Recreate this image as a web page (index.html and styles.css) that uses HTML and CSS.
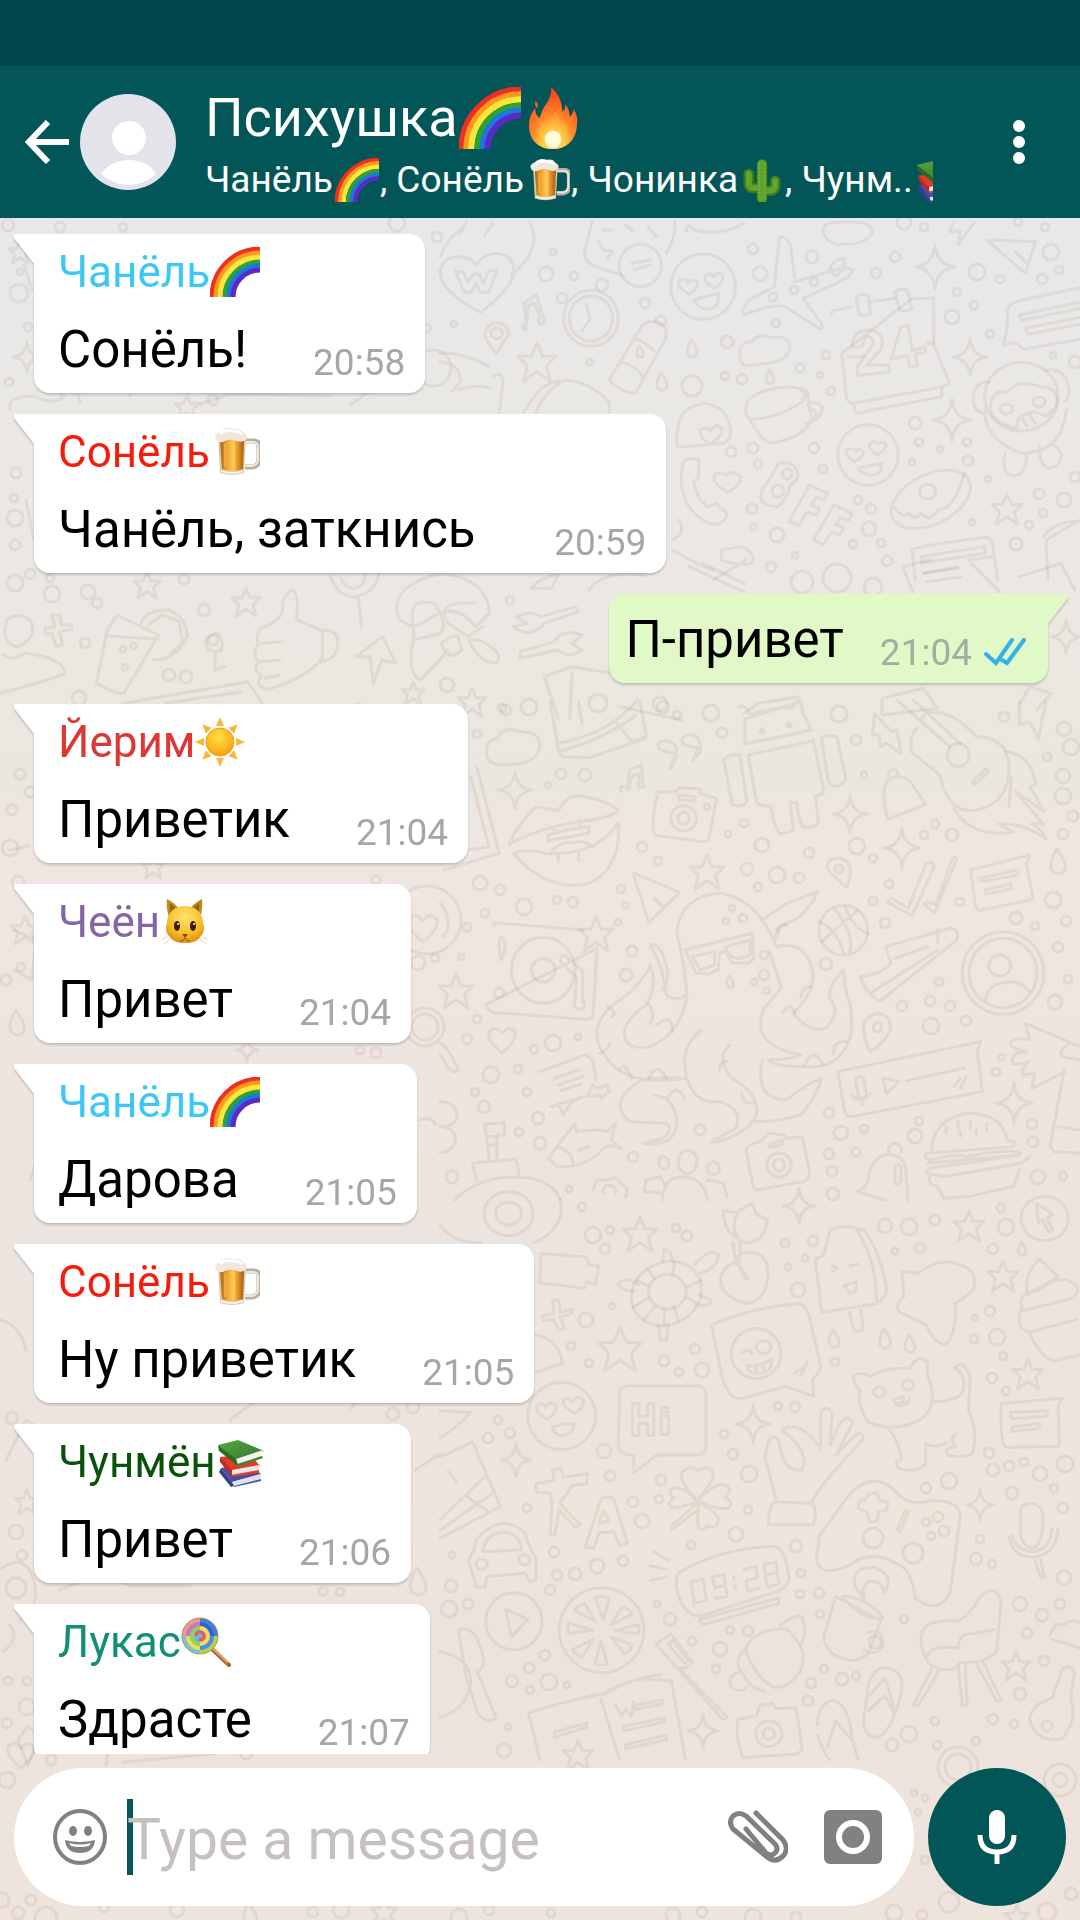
FILE: index.html
```html
<!DOCTYPE html>
<html lang="ru">
<head>
    <meta charset="UTF-8">
    <meta name="viewport" content="width=device-width, initial-scale=1.0">
    <title>Психушка</title>
    <link rel="stylesheet" href="styles.css">
</head>
<body>
    <!-- emoji set -->
    <svg class="defs" aria-hidden="true">
        <defs>
            <linearGradient id="beer-fill" x1="0" x2="1" y1="0" y2="0">
                <stop offset="0" stop-color="#a8620f"/>
                <stop offset=".3" stop-color="#f3a62c"/>
                <stop offset=".55" stop-color="#ffc758"/>
                <stop offset=".8" stop-color="#d9861c"/>
                <stop offset="1" stop-color="#a45d10"/>
            </linearGradient>
            <radialGradient id="fire-fill" cx=".5" cy=".9" r=".85">
                <stop offset="0" stop-color="#fffbd0"/>
                <stop offset=".25" stop-color="#ffd84a"/>
                <stop offset=".5" stop-color="#ff8a2a"/>
                <stop offset="1" stop-color="#f9401c"/>
            </radialGradient>
            <radialGradient id="sun-fill" cx=".45" cy=".35" r=".7">
                <stop offset="0" stop-color="#ffe04a"/>
                <stop offset=".6" stop-color="#fdb91f"/>
                <stop offset="1" stop-color="#f39a12"/>
            </radialGradient>
            <radialGradient id="cat-fill" cx=".5" cy=".3" r=".75">
                <stop offset="0" stop-color="#ffe36b"/>
                <stop offset=".6" stop-color="#f8bd2c"/>
                <stop offset="1" stop-color="#d8860c"/>
            </radialGradient>
            <linearGradient id="book-fill" x1="0" x2="1" y1="0" y2="1">
                <stop offset="0" stop-color="#5aa845"/>
                <stop offset="1" stop-color="#2f7728"/>
            </linearGradient>
        </defs>
        <symbol id="rainbow" viewBox="0 0 50 50">
            <g fill="none" stroke-width="5">
                <path stroke="#ee2f22" d="M2 50A48 48 0 0 1 50 2"/>
                <path stroke="#fb9a1c" d="M6 50A44 44 0 0 1 50 6"/>
                <path stroke="#fde63c" d="M10 50A40 40 0 0 1 50 10"/>
                <path stroke="#2da336" d="M15 50A35 35 0 0 1 50 15"/>
                <path stroke="#1f76e0" d="M19 50A31 31 0 0 1 50 19"/>
                <path stroke="#5a2bc4" d="M23 50A27 27 0 0 1 50 23"/>
            </g>
        </symbol>
        <symbol id="beer" viewBox="0 0 50 50">
            <path d="M35 14h9q5 0 5 6v12q0 7-7 8h-7" fill="none" stroke="#b9aea2" stroke-width="5"/>
            <path d="M35 15h8q5 0 5 5v12q0 6-6 7h-7" fill="none" stroke="#eee8e0" stroke-width="2"/>
            <path d="M8 10h28l-2 36q-12 4-24 0z" fill="#d8c9b4"/>
            <path d="M10 13h24l-1 29q-11 4-21 0z" fill="url(#beer-fill)"/>
            <path d="M15 16v24M24 16v25" stroke="#ffdc8a" stroke-width="1" opacity=".7"/>
            <path d="M11 44q11 4 22 0" stroke="#fbf3e4" stroke-width="2" fill="none"/>
            <path d="M6 13q-3-6 4-8Q15-1 24 2q7-1 9 3 6 3 3 8-5 3-9 1-8-3-12 0-5 3-9-1z" fill="#f1e7dc"/>
            <path d="M10 7q5-5 13-3 6 0 9 3" fill="none" stroke="#fff" stroke-width="3"/>
        </symbol>
        <symbol id="fire" viewBox="0 0 50 50">
            <g transform="translate(4 0) scale(.84 1)">
                <path d="M25 50C11 50 2 43 2 31c0-6 2-10 6-14 0 4 1 6 4 8 2-4 3-8 7-12 3-4 5-8 4-13 7 5 11 12 11 20 2-1 3-3 3-6 3 3 4 7 4 10 2-1 3-3 4-6 3 4 4 8 3 13-1 12-10 19-23 19z" fill="url(#fire-fill)"/>
                <path d="M8 11q4 2 2 6-3-1-2-6z" fill="#fb5a1e"/>
                <path d="M25 50c-8 0-14-5-14-12 0-5 3-9 6-11 0 4 1 5 3 6 1-6 6-8 6-14 5 4 7 8 6 13 2 0 3-2 3-4 3 3 4 6 4 10 0 8-6 12-14 12z" fill="#ffb838" opacity=".4"/>
                <ellipse cx="25" cy="42" rx="8" ry="7" fill="#fffbd8"/>
            </g>
        </symbol>
        <symbol id="cactus" viewBox="0 0 50 50">
            <path d="M25 46V7M25 34H15q-5 0-5-6V18M25 37h9q6 0 6-6v-5" fill="none" stroke="#3f7a1d" stroke-width="12" stroke-linecap="round"/>
            <path d="M25 46V7" stroke="#5da32c" stroke-width="10" stroke-linecap="round"/>
            <path d="M23 34h-8q-5 0-5-6V18M28 37h6q6 0 6-6v-5" fill="none" stroke="#5da32c" stroke-width="7" stroke-linecap="round"/>
            <path d="M22 7v40M28 7v40M9 18v9M40 27v5" stroke="#b5d55d" stroke-width="1" stroke-dasharray="1 3"/>
        </symbol>
        <symbol id="books" viewBox="0 0 50 50">
            <path d="M5 31l28-5 12 11-29 8z" fill="#4450a5"/>
            <path d="M16 45l29-8v5l-27 7z" fill="#e3e1ea"/>
            <path d="M5 31l11 14 2 4-3 1L3 35z" fill="#34408e"/>
            <path d="M18 49l27-7v2l-27 6z" fill="#4450a5"/>
            <path d="M4 20l30-3 10 12-28 6z" fill="#e23a2b"/>
            <path d="M16 33l27-5v6l-27 5z" fill="#eee9e8"/>
            <path d="M4 20l12 13v7L4 25z" fill="#c12a22"/>
            <path d="M15 38l28-5v3l-27 4z" fill="#e23a2b"/>
            <path d="M2 8L22 3l26 11-28 9z" fill="url(#book-fill)"/>
            <path d="M20 22l27-9-2 7-23 8z" fill="#f4f1ec"/>
            <path d="M2 8l18 14 2 7L3 14z" fill="#2c6a25"/>
            <path d="M21 27l25-8 1 2-26 9z" fill="#3a8530"/>
        </symbol>
        <symbol id="sun" viewBox="0 0 50 50">
            <g fill="#f8b83a">
                <path id="ray" d="M21 9l4-9 4 9z"/>
                <use href="#ray" transform="rotate(45 25 25)"/>
                <use href="#ray" transform="rotate(90 25 25)"/>
                <use href="#ray" transform="rotate(135 25 25)"/>
                <use href="#ray" transform="rotate(180 25 25)"/>
                <use href="#ray" transform="rotate(225 25 25)"/>
                <use href="#ray" transform="rotate(270 25 25)"/>
                <use href="#ray" transform="rotate(315 25 25)"/>
            </g>
            <circle cx="25" cy="25" r="14" fill="url(#sun-fill)" stroke="#f0a01c"/>
        </symbol>
        <symbol id="cat" viewBox="0 0 50 50">
            <path d="M7 2q8 4 12 10l-10 9Q6 10 7 2zM42 2q-8 4-12 10l10 9q3-9 2-19z" fill="#c08a17"/>
            <path d="M10 6q5 4 7 8l-7 6zM39 6q-5 4-7 8l7 6z" fill="#8c6512"/>
            <path d="M25 9c11 0 18 7 18 17 2 5 1 10-2 13-4 6-9 7-16 7s-12-1-16-7c-3-3-4-8-2-13C7 16 14 9 25 9z" fill="url(#cat-fill)"/>
            <ellipse cx="17" cy="29" rx="3" ry="5" fill="#3a2008"/>
            <ellipse cx="33" cy="29" rx="3" ry="5" fill="#3a2008"/>
            <circle cx="18" cy="27" r="1" fill="#fff"/>
            <circle cx="34" cy="27" r="1" fill="#fff"/>
            <path d="M22 37h6l-3 4z" fill="#7a4a26"/>
            <path d="M25 41q-1 3-5 3M25 41q1 3 5 3" fill="none" stroke="#8a5510" stroke-width="1"/>
            <path d="M10 42l-6 5M7 40l-5 3M40 42l6 5M43 40l5 3" stroke="#d9d3cf" stroke-width="1"/>
        </symbol>
        <symbol id="lollipop" viewBox="0 0 50 50">
            <path d="M31 32l17 16" stroke="#a4602c" stroke-width="4" stroke-linecap="round"/>
            <path d="M31 31l16 15" stroke="#e0a263" stroke-width="2"/>
            <circle cx="19" cy="19" r="18" fill="#7aaede"/>
            <g fill="none" stroke-width="4">
                <path d="M19 3a16 16 0 0 1 16 16" stroke="#3d7fe0"/>
                <path d="M35 19a16 16 0 0 1-16 16" stroke="#b4d24a"/>
                <path d="M19 35A16 16 0 0 1 3 19" stroke="#7cc0d8"/>
                <path d="M3 19A16 16 0 0 1 19 3" stroke="#ec9a8c"/>
                <path d="M19 7a12 12 0 0 1 12 12" stroke="#2f62d0"/>
                <path d="M31 19a12 12 0 0 1-12 12" stroke="#4b8ee0"/>
                <path d="M19 31A12 12 0 0 1 7 19" stroke="#e8e04e"/>
                <path d="M7 19A12 12 0 0 1 19 7" stroke="#c77ab4"/>
                <path d="M19 11a8 8 0 0 1 8 8 8 8 0 0 1-8 8" stroke="#f6dc5c"/>
                <path d="M19 27a8 8 0 0 1-8-8 8 8 0 0 1 8-8" stroke="#8ed06a"/>
                <path d="M15 19q0-5 5-4 4 2 3 6-2 3-5 1" stroke="#ea5c50" stroke-width="3"/>
            </g>
            <circle cx="19" cy="19" r="18" fill="none" stroke="#b8935c" stroke-width="1"/>
        </symbol>
    </svg>

    <!-- wallpaper -->
    <svg class="wallpaper" id="wallpaper" viewBox="0 0 1080 1920" preserveAspectRatio="xMidYMin slice" aria-hidden="true">
        <g transform="translate(440 220) scale(.408 .3333)">
            <path d="M100 277Q60 255 30 220 0 190 0 155 5 110 45 110q30 0 43 25 15-30 50-35 45 5 43 60-8 50-81 117zM0 110Q20 50 60 20M175 165q60-60 55-120L220 5M50 40l15-35M110 45L130 10"/>
            <path d="M38 152l20 5 10 30 15-25 15 2 8 28 12-38 22-3-20 65-20 2-12-28-12 28-18-3z"/>
            <path d="M373 5l-20 95q0 20 20 35l75 32M575 5q5 40-20 95M390 65l10 25 25 5-15 20M400 30h20M455 15l20 20M510 20l20 30"/>
            <ellipse cx="491" cy="136" rx="52" ry="64"/><path d="M470 130l45-10M475 150l40-15"/>
            <ellipse cx="370" cy="295" rx="67" ry="84"/><ellipse cx="370" cy="295" rx="53" ry="68"/><path d="M358 252l10 45-20 35"/>
            <path d="M138 400q-28-40-28-60 4-30 30-32 28 4 28 35zM125 340a14 16 0 1 0 28 0 14 16 0 1 0-28 0"/>
            <path d="M210 330a8 10 0 1 1 2-20l-6-60 30-25 18 70a8 10 0 1 1-8-2l-15-45-15 10z"/>
            <path d="M415 478l75-150q12-30 45-22 25 15 18 50l-75 165q-40-5-63-43zM440 425q40 10 60 50M475 355q30 10 50 40"/><circle cx="541" cy="302" r="13"/>
            <ellipse cx="645" cy="200" rx="79" ry="98"/><path d="M610 222q-30-20-25-38 15-15 23 3 10-15 23 0 2 20-21 35zM672 205q-28-20-22-38 12-15 20 3 12-20 24-2 2 20-22 37zM622 240l60-20q5 40-20 47-25 5-40-27z"/>
            <path d="M832 50q20 0 28 30l10 105 110-40q30-5 30 10-5 15-30 30l-90 50 45 75q5 20-5 15l-85-65q-30-10-100 25-10-20 20-50l55-35zM955 150q5-30 35-35v30l-20 25z"/>
            <path d="M735 410q-5-45 30-45 20-30 45-12 45-10 48 30-5 35-45 45l-60 10q-18-5-18-28z"/>
            <path d="M750 580q-10-55 70-75 60-10 80 10l10 75q-5 60-100 80-25-10-60-90zM765 597q60 0 120-50 20-25 0-35M900 555q20-15 37 5 0 40-40 50M905 570q20-5 15 20l-12 10"/>
            <path d="M960 280q0-12 20-12l30-8M1055 245l60-10M1155 237l55-3 0 140 38 110q0 10-20 18l-215 48q-18-3-18-30L985 400z"/>
            <path d="M1020 232q15-15 30-5l5 55q-12 10-28 2zM1115 215q15-12 30-5l12 55q-15 12-30 5zM1015 560l5 20 210-50v-25M1000 410l40 0M1195 370l15 0"/>
            <path d="M1010 380q0-50 45-50 40 10 25 60l-35 45 55 0 2 20-80 12 2-30 38-65q0-25-20-20l-8 30zM1110 400l20-80 18-3 10 75 30-10 2 15-25 5 5 35-18 5-7-35-42 10z"/>
            <path d="M1390 270q5-22 30-28l160-42v155l-150 33-20-20-30 8q15-60 10-106zM1420 285l160-42v20l-155 38zM1435 325l145-35v20l-140 33z"/>
            <path d="M1340 60l120 5-25 95zM1410 95l30 35"/>
            <ellipse cx="1425" cy="530" rx="90" ry="103"/><path d="M1335 570q0 90 90 130 100 0 110-130M1390 515q30-40 80-15 50 0 40 60l-25 30q-30-25-55-5-15 0-18 40-70-20-62-75 5-40 40-35zM1345 485q-40 0-38 60 5 35 30 35M1485 450q50-5 57 60 0 25-10 35M1415 600l10-10 15 30M1445 585l15 25M1385 700q-10 65 20 68 30 0 33-60M1470 680q-5 50 20 65 30 0 33-40-5-20-20-30"/>
            <circle cx="1388" cy="567" r="15"/><circle cx="1468" cy="546" r="15"/>
            <ellipse cx="1049" cy="705" rx="74" ry="91"/><path d="M1015 725q-25-20-17-35 15-10 20 5 10-12 20 0 0 15-23 30zM1072 705q-25-20-18-35 15-10 20 3 8-10 20 0 0 15-22 32zM1025 745l57-15q0 35-20 35-25 2-37-20z"/>
            <path d="M580 670Q580 600 600 575q45-45 90-5 30 50 20 85l-15 15-110 12zM660 673q-30-30-20-45 15-10 22 5 12-25 28-10 8 25-30 50z"/>
            <path d="M595 730q10-20 40-10l-2 55-12 10q10 55 35 75l20-10 28 30q-5 30-30 35Q600 890 590 780zM705 817q-40-30-33-50 15-18 28 0 15-20 38 5-5 30-33 45z"/>
            <path d="M830 730q40-10 48 35-5 20-20 30-5 40-30 65-50 0-40-45zM855 905l50-110 45 25-8 20-20-8-12 22 20 12-8 20-22-10-20 40zM915 960l50-105 45 25-8 22-22-10-10 22 20 10-10 20-20-8-20 38z"/>
            <ellipse cx="1203" cy="838" rx="110" ry="70" transform="rotate(-38 1203 838)"/><ellipse cx="1195" cy="815" rx="20" ry="22"/><path d="M1115 865q20 30 35 15 15 25 30 0 20 30 40-10 40 0 65-110"/>
            <path d="M1165 1080l-8-90q5-10 180-38 15 0 18 25l12 103M1180 1010l155-30v20l-155 30zM1185 1060l85-20M1295 1020l60-10M1490 1080l-5-120 83-60M1480 950q30-50 88-45"/>
            <path d="M0 400q60-5 120 40M0 425q50 5 50 60l-20 30M130 470q15-20 25 10l-10 100M45 510q40-20 80-5M205 578q40-90 85-95 70-10 125 65v30M235 578q20-60 60-90"/>
            <path d="M605 35q-5-30 20-5 60 20 120-20M940 40q-5-20 10-30l50-5q60 0 60 30-10 40-80 38-30 0-40-33zM1260 5l-10 30 25-2-5 40 40-65"/>
            <path d="M585 900q20 40-15 60M570 990q70 50 100 60M690 990l50-10q35 20 25 50-40 10-75-10zM750 1020l-80 60"/>
        </g>
        <g transform="translate(440 700) scale(.408 .3333)">
            <path d="M270 5l17 120q5 45 15 45l65 3 130-55q10 0 8-15L490 5M285 130q120-20 200-130M290 155q120-40 190-110M430 65l40 60 35-15M340 5l8 65"/>
            <path d="M115 165q-5-45 25-50 20-40 50-22l30 5q28 10 25 45-10 40-50 48-75 15-80-26z"/>
            <path d="M170 432q20-60 65-112l55 12q20-45 45-45 60 5 102 42-10 20-60 30-120 15-207 73zM180 460q30-15 80 0 120 10 178-92 5 150-80 185-100 20-178-93zM265 405q50-20 100-25v20l-100 22zM275 450q30-30 50-20 20-15 50 10M270 380l20 20M340 360l5 25M290 465v20M340 460v22"/>
            <path d="M735 20q15-10 25 25 60-25 100-20l20-25M885 5l5 35 20 50-162 42 0-75zM755 165l160-43 25 145q0 20-20 20l8 80q-10 20-38 15-10-20-17-75h-15l8 80q-10 15-35 12-15-30-20-80-30 0-35-15zM695 180q10-20 40-15l17 140q-12 20-35 8zM935 115q15-15 38-3l22 125q-10 25-35 20-10-10-10-30z"/>
            <path d="M535 275l45 0 5-12 50 3 5 15 38 15-20 125-10 5-120-20q-15-20 7-131zM585 285l40 5v12l-40-3z"/><ellipse cx="597" cy="355" rx="32" ry="38"/><ellipse cx="597" cy="355" rx="14" ry="18"/>
            <path d="M1120 0l130 140M1160 0l115 130M1170 85q-20 20-15 70l70 70q20 120 90 105 80-20 80-130-5-90-80-90-70-90-125-70-20 20 0 40M1305 245l35-40 5 10-35 40z"/><ellipse cx="1270" cy="165" rx="27" ry="35"/>
            <path d="M1260 325q40 90 145 72l-35-25q60-5 115 45-10-30-35-45 15-5 30 2l-70-100 70 60-35-75 15-5q-10-90-75-100M1400 230l-5 90M1420 5v70l25-10 22 50 18-110M1065 40l-5 65 15 0 5 35 15-10 35 30-10-70-15 3z"/>
            <path d="M1097 358q-15-70-5-105 20-40 60-10l38 70-25 12zM1100 228a12 14 0 1 1 22 0"/>
            <path d="M565 205l12-45q-38-5-43-20 0-22 25-15 25 0 20 50zM620 183l12-40q-38-5-40-20 5-22 28-18 22 10 18 50z"/>
            <path d="M445 275a9 9 0 1 1 14-5l5-60 30-15 5 65a8 8 0 1 1-10-15l-2-25-18 10-5 40"/>
            <path d="M472 517l115 60-75 90zM525 595l22 25M0 610q25 30 18 80l-10 20M90 200l55 260-135 50M75 230l45 210-50 10"/>
            <path d="M130 675q5-8 20-5l200 20M385 745l-10 205q-5 10-20 8l-220-20q-22-5-22-25zM150 780q-10-50 0-70 20 20 0 70zM295 785q0-25 15-15l40 45v85q10 25-5 28-20 0-15-25l5-70z"/><ellipse cx="253" cy="811" rx="78" ry="99"/><ellipse cx="253" cy="811" rx="29" ry="35"/>
            <path d="M580 700q10-115 110-120 90 20 135 160 80-20 90 90-5 60-50 110 40 60 80 45 40-50 10-90-5-40 35-85 0 60 15 100 10 80-5 120-30 80-110 70-70 0-85-20 50 0 80-15-130-30-90-140l42-62-30-110M580 700q15 60 25 180-20 30-50 5-10-100-40-145 10-20 30 20 25 80 0 110M605 880q-5 80-50 130-50 50-90 25-40-50 40-120 30-60 10-120-20 60-80 110-90 80-20 180 50 75 190 50M790 660l60-50 75-35q-10 40-50 80-60 30-50 60M640 990q-40 40-40 90 0 60 20 95 20 35 65 30 60 20 40 80l-60 40q20 5 60-20 60-40 50-90-10-50-60-80-40-60-5-100M595 1135q-90-10-120 20-60 60-10 110l90 5q20 20-10 45l-45 15q20 10 60-10 45-50-5-125l-30-10M790 1080q-20 120 60 120 50-50 85-65-10 50-50 110-60 20-110 20"/>
            <path d="M600 750l165-50 5 75-15 15-40-2-15-35-15 5-3 50-25 15-30-5zM618 770l55-15v40l-35 15zM700 740l60-20v45l-25 10q-30 0-35-35zM410 920q30 20 10 30M510 910q20 30 5 60M390 1060q25-10 25-30M440 1110q10-30 30 25M510 1140q20-60 45-5M530 975q40-40 40 20M840 940q20-40 30 0M830 700q-10-30 20-25M885 890q0-30 25-30M895 1095q20-60 45 0M965 1060q0-40 30-35M685 1110q0-30 20-25M740 1180q0 30 25 30M560 1190q20-40 40 5"/>
            <ellipse cx="989" cy="691" rx="60" ry="75"/><path d="M935 725l90-95M965 625q50 70 40 130M930 665q40 20 60 95M1048 700q-40-20-55-80"/>
            <path d="M1095 605l12-10 40 30 45-135 15-2 5 10-55 150zM1185 610l10-5 20 10 42-145 10 5-55 165z"/>
            <path d="M978 475q30 5 28 50l-8 38q-50-50-50-65 5-25 30-23zM1072 940q35 5 32 50-15 40-50 65-20-50-15-85 10-25 33-30z"/><ellipse cx="978" cy="507" rx="10" ry="12"/><ellipse cx="1072" cy="982" rx="10" ry="14"/>
            <path d="M1300 510l145-45-8 25 17 108-130 33q-10 0-12-15zM1325 535l92-25v15l-90 20zM1335 570l65-18v15l-62 15z"/>
            <path d="M1092 740l160-55q20 0 15 35l-190 185q-35-30-47-75 50-5 75-40zM1060 875l160-125M1115 775l80-35M1220 690v40"/>
            <ellipse cx="1380" cy="819" rx="100" ry="124"/><ellipse cx="1380" cy="819" rx="83" ry="104"/><ellipse cx="1372" cy="797" rx="27" ry="32"/><path d="M1338 900q0-50 60-55 35 5 45 30"/>
            <path d="M975 1115l350-90-8 30 12 120-320 75q-15 0-17-15zM1018 1135q10-10 20 0l8 50q-10 15-20 5zM1010 1185q20 30 45-5M1035 1200v15M1085 1135l40 10-30 35zM1145 1142l140-38M1260 1160l15-25M1275 1165l15-35"/>
            <path d="M1435 970l133 70M1435 975l10 45q-45-10-47 10 0 15 40 25-40 0-35 35 20 5 40-5-20 20-15 40l30-5q-5 25-8 45l83-50M1530 1110l-35 230 10 15 63 5M1515 1280l50 10M1545 1030q-30 20-20 40l43 10"/>
            <path d="M245 1115l110-50q20 5 22 35l5 40M350 1190l-30 20-18 35-10-30-20 5zM280 1135l60-25M290 1155l60-25M295 1172l50-20M360 1190l15-35 10 10 25-10 5 20-20 20-5-10z"/>
            <path d="M265 1375l65-105 5 25q50-10 75 0l20-25-10 50 25 25q-30-10-40-5-50 70-120 58zM290 1340q40 20 35 55M340 1350l25-10"/>
            <path d="M505 1440l35-10 15 30-10 20-45-5zM655 1440l40 10 8 40M545 1500q0-70 55-70 50 10 55 70M35 1500q60-70 150-68 90 0 110 68M85 1420l-5-30 105-12q10 30 8 55M90 1440l-5-20M108 1275q0-5 50-5v35h-20l2 70M110 1275l10 100M115 1310h25M115 1335h25M0 1205q40 0 42 45-5 30-42 30 40 5 38 40-10 40-38 38M0 1030q20 10 45 80-5 10-20 0l-25-45"/>
            <path d="M540 1370a15 20 0 1 1 10 40q-20-10-10-40zM605 1352q25 0 25 35-5 35-25 35-25-10-20-40 0-25 20-30zM670 1385q18 5 15 30-20 20-30-5 0-20 15-25z"/>
            <path d="M750 1350q0-15 35-25l20-25 40 5 5 10 38-5 18 105q0 25-15 30l-115 25q-10-5-12-30zM805 1335l35-15v12l-30 12z"/><ellipse cx="831" cy="1395" rx="30" ry="36"/><ellipse cx="831" cy="1395" rx="14" ry="18"/>
            <path d="M1022 1475q30-15 30-60 20-60 60-50 30 10 30 50l5 85M1022 1475l70 25M1100 1355a16 18 0 1 1 30 0M1115 1400q10-10 15 0v45q-10 15-15 5z"/>
            <path d="M1205 1350q5-100 95-110 80 5 90 80l20 5-5 15-210 20q-15 10 5 20 70-20 90-10 80-20 130-15v10l-220 40q-15 10-5 15l40 10 190-40 20-20M1200 1430q-5 25 20 30l15 35 60-5 110-30 15-50M1195 1390l225-25M1270 1265v20M1300 1265v20M1340 1270v20M1240 1280v20M1275 1295v15M1315 1290v15"/>
            <path d="M375 1470l10-30 25 0 20-8 15 20 15 15-5 25M400 1480a16 18 0 1 1 30 0"/>
        </g>
        <g transform="translate(440 1200) scale(.408 .357)">
            <path d="M0 70q30 50 100 50M230 120q80-40 65-120"/><ellipse cx="168" cy="38" rx="60" ry="62"/><ellipse cx="168" cy="38" rx="32" ry="32"/>
            <path d="M248 150l110 10 8 22 23 3-8 52-22-8-5 18-110-15zM250 325l30-8-5-35 15-2 5 35 28-10v12l-28 12 10 30-15 5-12-30-25 5zM230 378q60 5 70 80l-65 25"/>
            <ellipse cx="555" cy="262" rx="82" ry="94" transform="rotate(35 555 262)"/><ellipse cx="557" cy="257" rx="46" ry="48"/><path d="M545 172l5-35 15 10 5 28M625 180q40-50 58-25-5 40-45 50M475 255q-35 0-38-22 20-20 50 5M635 265l30 15q0 20-40 12M535 350l5 42h15l5-45M480 225l30 15M475 300l35-25M500 335l25-35M550 350l0-45M585 340l-12-40M630 290l-25-15M640 225l-35 20M575 175l-5 35M510 195l15 25"/>
            <path d="M695 30l30 5 40-25 10 30 28 15q-5 60-50 65-60-20-58-90zM730 35q-20 40 5 80M718 120l8 60M735 115v55M750 220q-30-50-15-70 60-15 68 40 5 90-50 100-70-20-65-75 20-50 45-35 10 20 22 40"/>
            <path d="M955 85q30-20 85 0 40 60 55 165 0 20-25 40l-135 25-15-150 20-10q10-40 15-70zM1020 80q50 90 50 200M1003 315l12 50q15 5 22-5l-5-50M960 185l15 5-12 10M1005 185l20-5M990 240l30-10q5 30-15 30z"/>
            <path d="M1132 200l40 5q50-45 100-25 50 20 35 70-15 20-45 40 5 80-20 115-30 0-50-55l-65-35q-15-15 10-45zM1470 165l45 50q-30 20-75 50-10-60 30-100zM1425 290q-5-30 40-35 40-40 75-30 40 20 10 50l-120 35zM1425 300q-20 60 20 70l115-35M1445 375q30 70 60 75l60-15"/>
            <ellipse cx="1482" cy="52" rx="58" ry="62"/><path d="M1462 10l40 30-15 10 15 35-10 5-15-35-10 10z"/>
            <path d="M665 350q100-50 215-60 20 5 28 50l25 125q0 20-20 35l3 50-68-28-110 35q-30 0-45-55z"/><ellipse cx="775" cy="430" rx="61" ry="70"/><circle cx="793" cy="412" r="18"/><path d="M740 430q15-20 25 0M752 465q35 0 60-20 5 40-30 40-25 5-30-20M775 465v15M790 460l5 15M868 485l20-15M885 490l15-35"/>
            <path d="M1015 490q20-10 40 5 40-30 95-22 20-45 45-20v40q30 80-15 120-60 40-130 10-30-50-20-90-20-20-15-43zM1207 565q60 0 75-30 10-40-20-65 20-30 38 30l-5 90q25 60 10 120-20 15-60 5l-5-15 25-10q-20-20 0-35M1240 680q-20 15-50 5l0 55q-20 25-65 12-15-20 5-25 0-40-30-85M1110 560l25-10v15l-15 8zM1120 575q20 5 30-15"/><circle cx="1077" cy="538" r="14"/><circle cx="1147" cy="518" r="14"/>
            <path d="M440 535q5-15 30-15h165q15 5 17 25v145q0 20-20 25H530l-55 50v-50q-35 0-38-25zM472 570h15v35h22v-35h15v90h-15v-35h-22v35h-15zM542 605h18v52h-18zM542 582h18v12h-18z"/>
            <ellipse cx="298" cy="605" rx="83" ry="94"/><path d="M262 615q-30-20-25-40 15-10 22 5 10-20 25-5 5 20-22 40zM330 597q-30-15-28-35 12-15 22 5 12-25 28-5 2 20-22 35zM275 635q30-10 55-8-5 30-30 35-20-5-25-27z"/>
            <path d="M0 590l75 5Q40 640 0 665M0 720l80-42 68 180L0 948M0 895l115-125M0 925l130-105M65 830l55 45M20 760l20 30"/>
            <path d="M235 795l45-10-5-30 22-3 5 25 60-10-3 28-35 5-30 50 50 60-12 8-40-50-10 70-12-3 5-85-5-30-35-2zM355 975l40-140q15-5 30 0l35 125-20 8-15-40-35 5-12 40zM390 905l10-35 15 30z"/>
            <path d="M630 840q-50-60-35-80 20-20 38 0 20-20 35 0 10 20-38 80zM632 842q50-60 75-40 10 10-8 30 20 10 10 30-30 10-77-20zM632 845q-40-50-65-35-10 15 8 25-20 10-10 25 20 5 67-15zM634 848q-5 50 0 70 15 10 20-5 30 10 28-20-5-20-48-45M630 850l-65 65 5 8 60-55"/>
            <path d="M805 910q0-60 20-65l90 5q10 30 0 60zM825 845l-28-120q5-50 15-60 15-5 18 10l10 50q20 40 48 30 20-50-50-110 10-15 45-5 40 30 50 60l0-100q10-30 28-5l-5 90 25-60q20-30 30 0l-40 90 50-60q20-5 15 15l-100 130-25 45"/>
            <path d="M930 940l70-110q60-80 120-10 30 40 85 22 70 0 70 45l-25 215q-30 60-85 15-10-90-50-100-60-40-110 5-80 40-82-20zM1050 825l20-5 8 20 20 8-3 20-20 5-3 25-18 5-8-30-22-10 5-22 15-3zM1120 925l20-55 8 5-20 55z"/>
            <path d="M1422 870q5-25 35-20 20 10 22 40-5 90-30 85-25-10-25-40zM1395 945q10 60 65 55 50-10 55-80M1400 940q15 45 55 45 40-5 45-65M1458 1005l15 55 8-3-10-55"/>
            <path d="M70 1010q15-30 20-60 60-80 120-15 5 30 25 70v60l-15 5-10-25-95 10-5 30h-20zM105 985q5-50 50-55 40 0 45 50z"/><circle cx="102" cy="1020" r="14"/><circle cx="207" cy="1008" r="14"/>
            <path d="M585 1045q100-70 235-75 30 10 35 95-5 20-25 30l-190 70q-30 5-50-40-20-60-5-80zM635 1175l195-60v15l-185 60zM615 1070l30-8 8 60-30 8zM668 1056l28-6 3 30-26 6zM700 1080l4 30-28 6M745 1035l30-8 3 30-28 10 4 28 30-8M795 1020l28-6 8 62-30 8zM798 1050l28-6M720 1055v8M724 1080v8M525 985l35 25M515 1025l40 10M515 1065l40-8"/>
            <ellipse cx="396" cy="1205" rx="104" ry="119"/><path d="M380 1115q15-10 35 0l-15 60zM445 1140q20 5 25 20l-50 30zM485 1190q5 10 0 25l-55-10zM470 1245q0 20-20 25l-30-45zM410 1300q-20 5-30 0l15-65zM350 1280q-20-5-25-20l50-30zM315 1215q-5-15 0-30l60 20zM330 1150q5-15 25-20l25 50z"/>
            <ellipse cx="181" cy="1180" rx="69" ry="80"/><path d="M160 1145l55 30-40 48z"/>
            <path d="M530 1245l35-30 55 80-15 15-20 0 120 140-12 5zM560 1245l10-10 40 55-10 8zM748 1260q20-60 100-60 60 60 35 120-30 50-65 45-40-20-70-105zM750 1255q-30 30-15 60 30 60 60 60M735 1320q-40 20-15 50 20 10 30-5M835 1190q50-40 55-15 10 40-5 70"/>
            <path d="M970 1110l110 70-30 90q-30 30-60 15-40-10-50-60zM985 1110q60 0 100 60-50 10-100-60zM1050 1210q40-10 35 40-20 30-45 10M1015 1070q0-45 50-40 50 20 25 70-10-40-40-30-20 20-10 45-20-20-25-45zM1265 1180q30-10 60-70 40-40 50 20l-10 130q-20 40-90 35-20 40-75 5-40-70-5-110 30-15 70-10zM1270 1250q5-40 35-35l55-12M1195 1275q10-30 75-20M1205 1315l-45 100 12 3 50-100M1270 1300l10 115h12l-5-120M1315 1300l50 105 10-5-45-110"/>
            <path d="M1050 1355q20-60 60-40 30 20 20 70-30 130-70 120-30-20-20-60zM1050 1390l40-50 15 50 10 50-25-50-40 40M925 1470q0-60 40-70 40 20 45 110l15 58M925 1500q20 60 30 68M950 1530l20-70 45 60M1500 1395l25-80q20-20 30 10l-10 75q20 50-20 110-70 10-80-60 10-40 55-55z"/>
            <path d="M1495 1220q10-40 35-30 15-20 38-5M1500 1230l68 25M730 1455l45-10 10-30 30-5 8 15 50-3 15 120-15 10-130 10q-20-50-13-107z"/><ellipse cx="806" cy="1495" rx="32" ry="36"/><ellipse cx="806" cy="1495" rx="14" ry="16"/>
            <path d="M245 1568l-28-130q40-20 180-55 80-50 130-40l40 5 35 220M395 1400l45 168M400 1385q80-50 140-55M430 1415l15 30 10-20 15 20 5-40M480 1415l65-15v12l-65 15zM450 1475l100-25v12l-100 25zM455 1525l100-25v12l-100 25zM280 1490l80-25v12l-80 28z"/>
            <path d="M45 1205q40-20 60 70 5 40-15 45l48 130q-20 20-45-10l-30-110zM0 1265q80 20 75 90-10 70-75 95"/>
            <path d="M1375 570l150-15-10 20 3 115-130 3q-15-5-13-123zM1398 595l90-5v15l-88 8zM1402 635l68-8v12l-68 10z"/>
        </g>
        <g transform="translate(0 560) scale(.689 .3333)">
            <path d="M10 180q20-30 35 5 10 50-20 75-25-10-15-80zM5 285q15 20 30-5 55 10 60 60-30 25-95 60M65 205l15-5-5-35 12 0 2 30 15 0v12l-18 8 5 40-10 3-5-38-10 3z"/>
            <path d="M170 165l60 60-50 175q-10 5-40-30l15-155zM157 228l73 10M205 190q5-40 40-40 25 20 27 80-15 70-50 70M215 195l20-30 25 20 5 60-20 40"/>
            <path d="M425 88q10 20 5 90l38 35v80q-20 60-80 95-20-10-8-40-15-20-5-40-10-30 0-55-5-30 5-50 30-20 30-60 0-40 15-55zM468 210q25 0 22 40 0 50-25 55M380 250l30-5M378 305l28-5M385 355l20-10"/>
            <path d="M480 50q10 60 35 60 30-10 35-70M495 55q5 30 20 30 15-5 15-45M520 115l5 85M315 220q12 20 5 55l-18-5q-10-40 13-50zM312 280v50l15-10M555 230l-38 60 20 0 5 80 12-70 20 8z"/>
            <path d="M580 180q-20-100 60-140 70 20 70 120l-20 40q-30-80-70-20-20 30-30 10zM600 200q-10-90 30-70 20 60 10 90l-40 20zM690 130q-60-10-40 60l30 40 20-30M600 240q-10 100 10 120 25-50 40-90M695 240q40 40 25 70-25-5-40-70zM640 250q20-30 25-20l5 40q-20 40-30-20z"/>
            <path d="M750 170q20-20 35 0l50-30 5 15-50 35q-20 50-45 10l20-10zM755 275l50-30q10-40 40-20l-15 25 15 20q-20 30-35 0l-55 25zM790 350l40-30 60 20M790 350l20 125M830 340l-3 135M770 85q20-40 40-40l-10 40zM855 90q20-60 80-45M1000 20l80 75M1020 10l60 60M1310 20l40-20M1310 20l15 75M1340 40l50-15M1345 65l50-15M1410 10l40 85M1480 50l60-40 20 80"/>
            <path d="M180 430l180-65 20 65M240 430l110-35M1280 415l60-30 20 60-80 20zM1480 430l15-50 30 20-20 50M900 440l90 40M1080 460l20-30 60-20"/>
        </g>
        <path d="M24 265l8 25M10 410q-4-14 24-14 20 10 30 0M26 500l8 40M60 400l4-16M80 402q-10-30 10-20M130 396l4-20M200 404l30-10 100 2M350 405l20-14M10 850l18-4M30 1180l10-30M14 930l22 10-4 40-18-10M0 1320q20 4 26 30M6 1460l20-40 10 6M10 1625q10 14-6 26M0 1570q24-20 34 10 6 30-14 40M60 1590q40-20 70-4h60M415 1470l25-16M350 1410q20-30 40-10M230 1420l40-30 20 10M18 1740l10-14 10 10-10 30zM106 1765l6-40M124 1762l90-8M420 1120q10-4 16 4"/>
    </svg>

    <div class="screen">
        <div class="status-bar"></div>

        <header class="header">
            <button class="icon-btn back" aria-label="Назад">
                <svg viewBox="0 0 44 44" width="44" height="44"><path d="M44 22H4M23 2L4 22l19 20" fill="none" stroke="#fff" stroke-width="6"/></svg>
            </button>
            <svg class="avatar" viewBox="0 0 96 96" width="96" height="96" aria-hidden="true">
                <circle cx="48" cy="48" r="48" fill="#e2e4ea"/>
                <circle cx="49" cy="44" r="17" fill="#fff"/>
                <path d="M21 80q10-14 28-14t27 14q-12 11-27 11T21 80z" fill="#fff"/>
            </svg>
            <div class="title">
                <h1>Психушка<svg class="emoji"><use href="#rainbow"/></svg><svg class="emoji"><use href="#fire"/></svg></h1>
                <p>Чанёль<svg class="emoji"><use href="#rainbow"/></svg>, Сонёль<svg class="emoji"><use href="#beer"/></svg>, Чонинка<svg class="emoji"><use href="#cactus"/></svg>, Чунм..<svg class="emoji"><use href="#books"/></svg></p>
            </div>
            <button class="icon-btn menu" aria-label="Меню">
                <svg viewBox="0 0 12 44" width="12" height="44" fill="#fff"><circle cx="6" cy="6" r="6"/><circle cx="6" cy="22" r="6"/><circle cx="6" cy="38" r="6"/></svg>
            </button>
        </header>

        <main class="chat">
            <div class="bubble">
                <div class="name cyan">Чанёль<svg class="emoji"><use href="#rainbow"/></svg></div>
                <div class="row"><span class="text">Сонёль!</span><time>20:58</time></div>
            </div>
            <div class="bubble">
                <div class="name red">Сонёль<svg class="emoji"><use href="#beer"/></svg></div>
                <div class="row"><span class="text">Чанёль, заткнись&nbsp;</span><time>20:59</time></div>
            </div>
            <div class="bubble own">
                <div class="row">
                    <span class="text">П-привет</span><time>21:04</time>
                    <svg class="ticks" viewBox="0 0 42 28" width="42" height="28"><path d="M2 16l10 9L28 2M18 22l5 3L40 2" fill="none" stroke="#34b0ea" stroke-width="4" stroke-linecap="round"/></svg>
                </div>
            </div>
            <div class="bubble">
                <div class="name crimson">Йерим<svg class="emoji"><use href="#sun"/></svg></div>
                <div class="row"><span class="text">Приветик</span><time>21:04</time></div>
            </div>
            <div class="bubble">
                <div class="name purple">Чеён<svg class="emoji"><use href="#cat"/></svg></div>
                <div class="row"><span class="text">Привет</span><time>21:04</time></div>
            </div>
            <div class="bubble">
                <div class="name cyan">Чанёль<svg class="emoji"><use href="#rainbow"/></svg></div>
                <div class="row"><span class="text">Дарова</span><time>21:05</time></div>
            </div>
            <div class="bubble">
                <div class="name red">Сонёль<svg class="emoji"><use href="#beer"/></svg></div>
                <div class="row"><span class="text">Ну приветик</span><time>21:05</time></div>
            </div>
            <div class="bubble">
                <div class="name green">Чунмён<svg class="emoji"><use href="#books"/></svg></div>
                <div class="row"><span class="text">Привет</span><time>21:06</time></div>
            </div>
            <div class="bubble">
                <div class="name teal">Лукас<svg class="emoji"><use href="#lollipop"/></svg></div>
                <div class="row"><span class="text">Здрасте</span><time>21:07</time></div>
            </div>
        </main>

        <form class="composer">
            <div class="field">
                <button type="button" class="icon-btn" aria-label="Эмодзи">
                    <svg viewBox="0 0 54 56" width="54" height="56">
                        <ellipse cx="27" cy="28" rx="25" ry="26" fill="none" stroke="#808184" stroke-width="4"/>
                        <ellipse cx="20" cy="22" rx="4" ry="5" fill="#808184"/>
                        <ellipse cx="35" cy="22" rx="4" ry="5" fill="#808184"/>
                        <path d="M12 31q15 4 30 0-1 13-15 13T12 31z" fill="#808184"/>
                        <path d="M16 34q11 3 22 0l-2 3q-9 2-18 0z" fill="#fff"/>
                    </svg>
                </button>
                <div class="entry">
                    <span class="caret"></span>
                    <input type="text" placeholder="Type a message" aria-label="Сообщение">
                </div>
                <button type="button" class="icon-btn" aria-label="Прикрепить">
                    <svg viewBox="0 0 60 54" width="60" height="54" fill="none" stroke="#808080" stroke-width="5" stroke-linecap="round"><path d="M28 3l27 27q6 8 1 15-8 9-17 2L5 19q-5-7 0-13 6-5 13 0l29 28q4 5 0 9-4 4-9 0L18 19"/></svg>
                </button>
                <button type="button" class="icon-btn" aria-label="Камера">
                    <svg viewBox="0 0 58 54" width="58" height="54"><rect width="58" height="54" rx="6" fill="#828083"/><circle cx="29" cy="27" r="14" fill="none" stroke="#fff" stroke-width="6"/></svg>
                </button>
            </div>
            <button type="button" class="mic" aria-label="Голосовое сообщение">
                <svg viewBox="0 0 40 54" width="40" height="54"><rect x="12" width="16" height="34" rx="8" fill="#fff"/><path d="M3 25q0 17 17 17t17-17M20 42v12" fill="none" stroke="#fff" stroke-width="5"/></svg>
            </button>
        </form>
    </div>

    <script>
        // small filler shapes between the big doodles
        const shapes = {
            star: 'M0-10L3-3 10-3 5 2 7 10 0 5-7 10-5 2-10-3-3-3Z',
            spark: 'M0-11Q1-1 10 0 1 1 0 11-1 1-10 0-1-1 0-11Z',
            heart: 'M0 10Q-12 0-10-6-5-12 0-5 5-12 10-6 12 0 0 10Z',
            drop: 'M-1-10Q8 2 5 7 0 12-5 6-7 0-1-10Z'
        };

        // [x, y, radius] for dots, [x, y, size, shape] for the rest
        const panels = [
            { x: 440, y: 220, sx: 2.45, sy: 3, items: [
                [278,96,3],[260,163,7],[328,168,4],[300,235,5],[398,195,6],[502,250,5],[367,427,3],[34,313,3],[768,87,5],[784,162,7],[911,111,6],[1067,160,5],[1114,111,5],[917,187,4],[868,211,4],[815,231,4],[822,310,4],[702,366,6],[945,404,4],[881,445,4],[932,465,3],[698,468,4],[739,477,5],[958,514,4],[618,497,10],[1186,21,4],[1138,5,7],[1267,215,4],[1309,254,4],[1254,290,7],[1315,156,8],[1371,178,4],[1497,97,8],[1476,177,5],[1516,151,4],[1483,21,4],[1416,5,4],[1348,342,4],[1502,405,3],[1555,425,6],[1164,610,6],[1174,667,4],[1225,686,3],[1291,666,4],[1156,725,3],[1293,724,5],[1342,778,3],[1555,772,5],[917,683,5],[768,685,5],[713,696,5],[778,731,4],[939,746,4],[1024,841,4],[1056,866,5],[765,867,5],[766,922,3],[825,944,7],[1051,928,7],[1013,972,4],[1080,968,4],[869,1005,3],[1096,1023,5],[810,1040,5],[1303,905,3],[1443,915,4],[1478,880,4],[1410,971,6],[1468,821,5],[1528,840,7],[851,763,5],[828,812,6],
                [238,425,19,'star'],[1388,866,15,'star'],[1213,142,20,'spark'],[1298,412,17,'spark'],[1254,600,19,'spark'],[617,386,9,'drop'],[545,485,9,'drop'],[809,470,7,'drop'],[490,395,6,'drop']] },
            { x: 440, y: 700, sx: 2.45, sy: 3, items: [
                [152,24,4],[218,20,8],[90,102,4],[297,222,5],[355,224,6],[264,255,3],[538,13,7],[580,46,4],[664,38,8],[692,100,5],[978,42,8],[1018,120,5],[856,76,2],[788,93,2],[655,320,3],[706,402,3],[745,369,4],[496,440,5],[533,482,4],[99,550,7],[146,571,5],[205,621,8],[286,601,4],[327,605,5],[443,568,4],[454,614,3],[436,665,3],[470,752,5],[455,825,6],[67,682,4],[111,640,4],[51,772,3],[90,956,4],[145,879,5],[65,1016,5],[278,1029,8],[230,1048,4],[337,1012,3],[126,1125,8],[191,1108,4],[85,1176,4],[212,1177,4],[109,1220,6],[239,1254,6],[194,1295,4],[245,1330,6],[474,1370,5],[317,1466,3],[29,1432,6],[790,435,7],[905,458,5],[752,508,6],[780,561,4],[825,525,8],[879,535,5],[1022,438,8],[1060,475,4],[1186,404,4],[1255,405,6],[1213,372,4],[1040,225,3],[1381,50,5],[1487,172,4],[1528,86,7],[1545,142,8],[1527,227,7],[1527,289,8],[1551,347,5],[1526,402,5],[1503,600,8],[1412,653,6],[1457,677,4],[1273,607,4],[1061,603,4],[1100,551,4],[1090,668,5],[1533,662,5],[1514,740,5],[1538,838,4],[1507,907,7],[1222,845,4],[1132,918,5],[1201,904,5],[1250,919,5],[1202,977,8],[1289,963,5],[1375,1070,3],[1363,1115,4],[1450,1271,5],[1452,1326,5],[1466,1432,7],[1526,1427,4],[1174,1264,4],[1163,1307,7],[1040,1288,4],[982,1300,7],[952,1240,5],[954,1361,5],[1020,1356,4],[960,1413,5],[964,1482,6],[636,1291,5],[716,623,3],[743,653,4],[701,662,3],[793,765,4],[795,825,5],[769,847,3],[801,874,3],[945,793,6],
                [654,516,17,'star'],[382,703,17,'star'],[40,873,17,'star'],[183,270,17,'spark'],[1005,341,17,'spark'],[1132,445,18,'spark'],[1406,1210,18,'spark'],[153,1020,13,'heart'],[711,845,6,'drop'],[1515,485,13,'drop']] },
            { x: 440, y: 1200, sx: 2.45, sy: 2.8, items: [
                [348,20,4],[374,97,8],[416,84,4],[405,138,5],[578,77,4],[605,101,5],[421,298,3],[358,337,7],[320,408,4],[366,456,4],[548,450,5],[585,481,4],[625,416,5],[641,477,7],[845,121,4],[914,116,5],[894,162,3],[852,187,3],[876,251,7],[1091,73,7],[1148,76,8],[1213,57,5],[1114,142,3],[1175,135,5],[1387,75,8],[1375,23,4],[1354,136,5],[1348,310,5],[1310,331,3],[1309,388,4],[1365,384,8],[1380,438,4],[1352,498,5],[1386,535,4],[968,453,4],[827,577,4],[870,580,5],[697,656,4],[718,711,5],[757,767,8],[755,868,4],[726,935,7],[615,965,4],[542,785,5],[536,838,4],[473,845,5],[495,899,7],[416,774,5],[402,704,7],[172,651,5],[117,665,5],[141,617,4],[212,863,4],[280,986,5],[287,1049,5],[330,1046,6],[384,1024,7],[448,1012,5],[29,994,3],[28,1081,6],[21,1145,8],[69,1130,5],[270,1092,5],[531,1130,3],[564,1174,6],[711,1205,4],[755,1206,5],[617,1234,4],[686,1258,7],[675,1312,4],[257,1273,5],[217,1310,5],[177,1347,6],[221,1372,4],[266,1350,8],[311,1358,3],[167,1476,3],[156,1540,7],[872,968,6],[884,1044,4],[882,1103,4],[928,1100,5],[930,1158,4],[1138,1174,4],[940,1314,4],[985,1342,6],[1018,1332,4],[909,1352,5],[902,1403,5],[1213,1458,4],[1148,1495,8],[1107,1525,6],[1217,1527,4],[1354,1454,5],[1406,1468,4],[1420,1384,6],[1480,1292,5],[1438,1212,5],[1475,1161,6],[1518,1130,5],[1420,1130,7],[1530,1057,7],[1527,863,5],[1402,820,6],[1470,768,7],[1505,805,4],[1430,733,4],[1394,745,5],[1355,755,6],[1346,709,5],[1532,738,8],[1246,788,8],[1190,806,5],[1324,949,4],[1312,1005,6],[1353,1018,4],[1062,947,10],[1160,988,10],[1190,901,4],[1220,888,5],[1235,926,5],[1202,941,4],[1065,1237,6],[1488,1473,5],[1312,1514,4],
                [490,94,17,'star'],[1297,72,15,'star'],[1379,214,15,'star'],[1440,487,15,'star'],[1412,1304,14,'star'],[440,418,22,'star'],[338,1555,15,'star'],[880,18,16,'spark'],[768,628,17,'spark'],[187,727,15,'spark'],[1324,853,14,'spark'],[645,1487,15,'spark'],[966,390,9,'drop'],[1090,388,10,'drop'],[1152,403,9,'drop'],[1426,138,7,'drop']] },
            { x: 0, y: 560, sx: 1.452, sy: 3, items: [
                [22,70,8],[72,55,4],[75,103,8],[128,95,7],[141,130,5],[267,57,5],[296,151,6],[245,345,6],[270,350,6],[123,248,5],[178,268,3],[195,258,3],[182,320,3],[649,375,7],[740,120,4],[310,240,5],[962,440,6],[1165,65,11],[1215,55,14],[1268,80,9],[114,415,7],[868,430,9],[520,450,6],[735,450,5],
                [213,75,13,'star'],[357,125,14,'star'],[686,425,14,'star'],[600,400,11,'star'],[1548,230,15,'spark']] },
            { x: 0, y: 220, sx: 3, sy: 3, items: [
                [60,155,3],[56,220,9],[85,320,4],[27,485,4],[24,15,6],[180,20,5],[370,20,4],[640,540,5],[1190,10,8],[1310,50,5],[1280,325,4],[1300,445,18],[47,760,5],[42,835,4],[45,893,8],[45,975,5],[90,1062,5],[60,95,11,'star'],[80,410,14,'spark'],[560,560,12,'star']] },
            { x: 0, y: 700, sx: 3, sy: 3, items: [
                [60,223,5],[35,330,5],[30,445,8],[18,840,5],[62,800,4],[90,275,5],[55,545,6],[1255,790,7],[1305,773,4],[1128,540,4],[1080,1050,4],[1128,1060,5],[1275,980,19],[1275,980,13],[1280,660,34],[1270,685,14,'heart'],[75,690,14,'star'],[460,500,11,'star'],[740,1050,11,'spark'],[50,970,13,'drop']] },
            { x: 0, y: 1400, sx: 3, sy: 3, items: [
                [35,55,6],[48,395,7],[65,465,5],[48,565,10],[22,968,5],[80,920,8],[25,842,4],[80,842,4],[1178,42,6],[1240,20,6],[1020,577,4],[970,573,4],[80,305,12,'star'],[1255,545,14,'drop']] },
            { x: 0, y: 1740, sx: 2.8, sy: 3, items: [
                [20,120,8],[143,60,5],[5,480,7],[87,480,5],[50,520,6],[290,500,5],[495,510,7],[875,515,5],[955,510,8],[1285,530,8],[1370,510,5],[1543,520,4],[690,40,6],[60,45,13,'heart'],[130,535,11],[1075,515,13,'star'],[700,525,12,'drop']] },
            { x: 560, y: 1740, sx: 3, sy: 3, items: [
                [425,517,5],[340,525,7],[580,530,8],[708,532,5],[1002,520,8],[1085,525,5],[1168,485,10],[1460,515,9],[1533,463,6],[1095,360,4],[1075,216,3],[1062,160,3],[1095,175,3],[1195,80,20],[1195,80,13],[1500,120,7],[1500,120,16],[1370,530,12,'star']] }
        ];

        const wallpaper = document.getElementById('wallpaper');
        let markup = '';
        for (const panel of panels) {
            for (const [px, py, size, shape] of panel.items) {
                const x = Math.round(panel.x + px / panel.sx);
                const y = Math.round(panel.y + py / panel.sy);
                if (shape) {
                    markup += `<path d="${shapes[shape]}" transform="translate(${x} ${y}) scale(${size / 10})"/>`;
                } else {
                    markup += `<circle cx="${x}" cy="${y}" r="${size}"/>`;
                }
            }
        }
        wallpaper.insertAdjacentHTML('beforeend', `<g>${markup}</g>`);
    </script>
</body>
</html>
```

FILE: styles.css
```css
* {
    box-sizing: border-box;
}

body {
    margin: 0;
    font-family: Roboto, 'Noto Sans', sans-serif;
    background: linear-gradient(#e7e8ea 11%, #ebe8e3 24%, #ebe6e0 40%, #efe6e1 45%, #ece4de 62%, #ede4df 76%, #eee6dc 79%, #ede3de 84%, #eee4dc 100%);
}

button {
    border: none;
    padding: 0;
    background: none;
    cursor: pointer;
}

svg {
    display: block;
    flex-shrink: 0;
}

.defs {
    position: absolute;
    width: 0;
    height: 0;
}

.wallpaper {
    position: absolute;
    top: 0;
    left: 0;
    width: 100%;
    height: 100%;
    fill: none;
    stroke: rgba(125, 95, 90, 0.1);
    stroke-width: 3;
    stroke-linejoin: round;
    stroke-linecap: round;
}

.wallpaper * {
    vector-effect: non-scaling-stroke;
}

.screen {
    position: relative;
    display: flex;
    flex-direction: column;
    height: 100vh;
    overflow: hidden;
}

.status-bar {
    height: 66px;
    flex-shrink: 0;
    background: #01464a;
}

/* header */
.header {
    display: flex;
    align-items: center;
    flex-shrink: 0;
    padding: 14px 55px 14px 25px;
    background: #025658;
    color: #fff;
}

.avatar {
    margin-left: 11px;
}

.title {
    flex: 1;
    min-width: 0;
    margin: 0 80px 0 29px;
    padding-top: 6px;
}

.title h1,
.title p {
    display: flex;
    align-items: center;
    margin: 0;
    font-weight: 400;
    white-space: pre;
    overflow: hidden;
}

.title h1 {
    font-size: 54px;
    line-height: 64px;
}

.title p {
    margin-top: 6px;
    font-size: 37px;
    line-height: 48px;
}

.title h1 .emoji {
    width: 62px;
    height: 62px;
    margin-left: 1px;
}

.title p .emoji {
    width: 44px;
    height: 44px;
    margin: 0 1px 0 2px;
}

/* messages */
.chat {
    display: flex;
    flex: 1;
    flex-direction: column;
    align-items: flex-start;
    gap: 21px;
    min-height: 0;
    padding: 16px 32px 0 34px;
    overflow: hidden;
}

.bubble {
    position: relative;
    flex-shrink: 0;
    padding: 13px 20px 8px 24px;
    border-radius: 0 16px 16px 16px;
    background: #fff;
    filter: drop-shadow(0 2px 1px rgba(0, 0, 0, 0.18));
}

.bubble::before {
    content: '';
    position: absolute;
    top: 0;
    left: -20px;
    width: 21px;
    height: 31px;
    background: inherit;
    clip-path: polygon(2px 0, 100% 0, 100% 100%, 0 4px, 0 1px);
}

.bubble.own {
    align-self: flex-end;
    padding: 16px 22px 8px 16px;
    border-radius: 16px 0 16px 16px;
    background: #e1f8c7;
}

.bubble.own::before {
    left: auto;
    right: -20px;
    clip-path: polygon(0 0, 19px 0, 100% 1px, 100% 4px, 0 100%);
}

.name {
    display: flex;
    align-items: center;
    height: 50px;
    margin-bottom: 23px;
    font-size: 44px;
    line-height: 50px;
}

.name .emoji {
    width: 50px;
    height: 50px;
}

.cyan { color: #3cc8f6; }
.red { color: #f51c0b; }
.crimson { color: #dc3733; }
.purple { color: #8565a6; }
.green { color: #09520c; }
.teal { color: #118f74; }

.row {
    display: flex;
    align-items: flex-end;
}

.text {
    margin-right: 66px;
    padding-bottom: 5px;
    font-size: 51px;
    line-height: 60px;
    color: #000;
}

.own .text {
    margin-right: 36px;
}

time {
    font-size: 37px;
    line-height: 44px;
    color: #a6a6aa;
}

.own time {
    color: #a0aea0;
}

.ticks {
    margin: 0 0 9px 12px;
}

/* composer */
.composer {
    display: flex;
    align-items: center;
    flex-shrink: 0;
    gap: 14px;
    padding: 14px;
}

.field {
    display: flex;
    flex: 1;
    align-items: center;
    gap: 36px;
    min-width: 0;
    height: 138px;
    padding: 0 32px 0 39px;
    border-radius: 69px;
    background: #fff;
}

.entry {
    position: relative;
    flex: 1;
    min-width: 0;
    margin-left: -16px;
}

.entry input {
    position: relative;
    display: block;
    width: 100%;
    height: 76px;
    padding: 4px 0 0;
    border: none;
    outline: none;
    background: transparent;
    font: 57px/72px Roboto, 'Noto Sans', sans-serif;
    color: #000;
}

.entry input::placeholder {
    color: #c6c0c1;
    opacity: 1;
}

.caret {
    position: absolute;
    top: 0;
    left: 0;
    width: 6px;
    height: 76px;
    background: #05585a;
}

.mic {
    display: flex;
    align-items: center;
    justify-content: center;
    width: 138px;
    height: 138px;
    border-radius: 50%;
    background: #025657;
}
```
